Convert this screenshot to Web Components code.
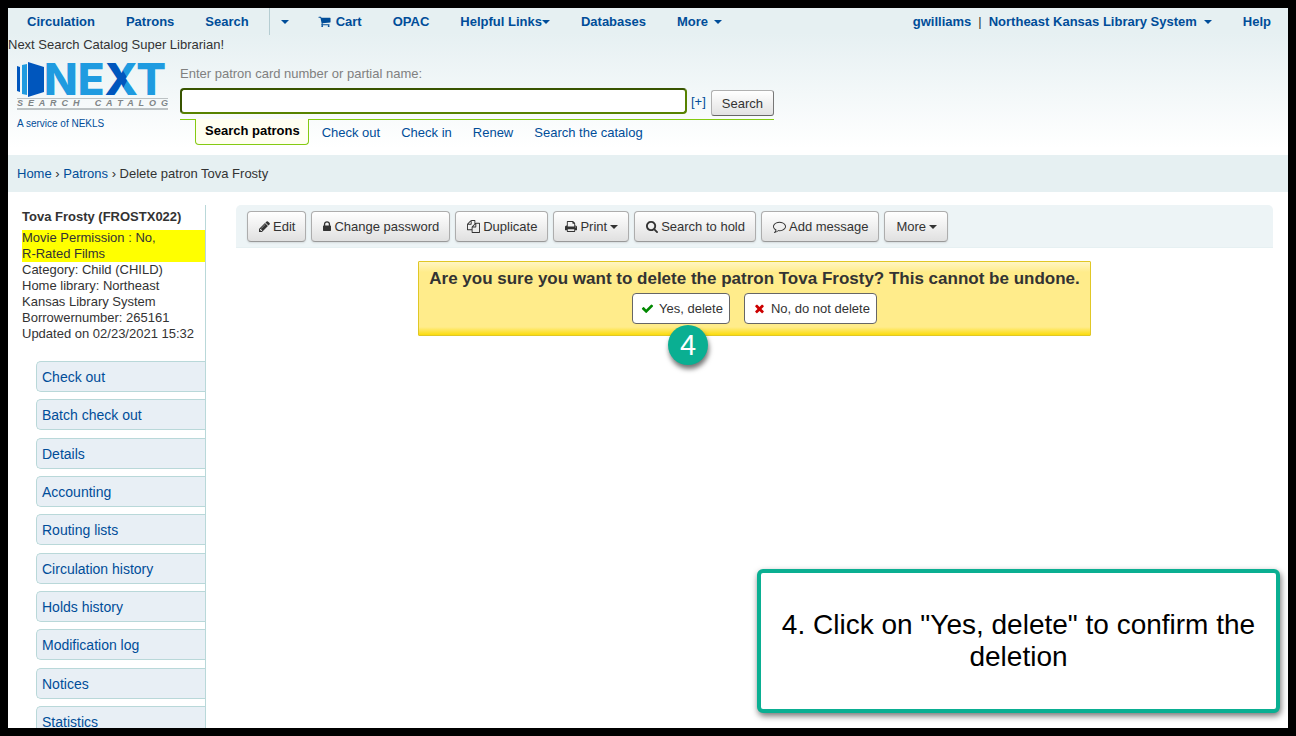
<!DOCTYPE html>
<html lang="en">
<head>
<meta charset="utf-8">
<title>Delete patron Tova Frosty</title>
<style>
  html, body { margin: 0; height: 100%; }
  body { font: 13px/20px "Liberation Sans", Arial, sans-serif; color: #333; background: #000; }
</style>
</head>
<body>
<app-shell></app-shell>

<script>
const LINK = 'a { color: #004d99; text-decoration: none; }';

function define(name, css, html, upgrade) {
  const template = document.createElement('template');
  template.innerHTML = `<style>:host, *, *::before, *::after { box-sizing: border-box; } ${LINK} ${css}</style>${html}`;
  customElements.define(name, class extends HTMLElement {
    connectedCallback() {
      if (this.shadowRoot) return;
      this.attachShadow({ mode: 'open' }).append(template.content.cloneNode(true));
      if (upgrade) upgrade(this, this.shadowRoot);
    }
  });
}

// name: [drawn width in px, left edge of the glyph, width of the glyph, path]
const ICONS = {
  cart: [13, 0, 1792, 'M704 1536q0 52-38 90t-90 38-90-38-38-90 38-90 90-38 90 38 38 90zm896 0q0 52-38 90t-90 38-90-38-38-90 38-90 90-38 90 38 38 90zm128-1088v512q0 24-16.5 42.5t-40.5 21.5l-1044 122q13 60 13 70 0 16-24 64h920q26 0 45 19t19 45-19 45-45 19h-1024q-26 0-45-19t-19-45q0-11 8-31.5t16-36 21.5-40 15.5-29.5l-177-823h-204q-26 0-45-19t-19-45 19-45 45-19h256q16 0 28.5 6.5t19.5 15.5 13 24.5 8 26 5.5 29.5 4.5 26h1201q26 0 45 19t19 45z'],
  pencil: [11, 128, 1536, 'M491 1536l91-91-235-235-91 91v107h128v128h107zm523-928q0-22-22-22-10 0-17 7l-542 542q-7 7-7 17 0 22 22 22 10 0 17-7l542-542q7-7 7-17zm-54-192l416 416-832 832h-416v-416zm683 96q0 53-37 90l-166 166-416-416 166-165q36-38 90-38 53 0 91 38l235 234q37 39 37 91z'],
  lock: [8, 320, 1152, 'M640 768h512v-192q0-106-75-181t-181-75-181 75-75 181v192zm832 96v576q0 40-28 68t-68 28h-960q-40 0-68-28t-28-68v-576q0-40 28-68t68-28h32v-192q0-184 132-316t316-132 316 132 132 316v192h32q40 0 68 28t28 68z'],
  copy: [13, 0, 1792, 'M1696 384q40 0 68 28t28 68v1216q0 40-28 68t-68 28h-960q-40 0-68-28t-28-68v-288h-544q-40 0-68-28t-28-68v-672q0-40 20-88t48-76l408-408q28-28 76-48t88-20h416q40 0 68 28t28 68v328q68-40 128-40h416zm-544 213l-299 299h299v-299zm-640-384l-299 299h299v-299zm196 647l316-316v-416h-384v416q0 40-28 68t-68 28h-416v640h512v-256q0-40 20-88t48-76zm956 804v-1152h-384v416q0 40-28 68t-68 28h-416v640h896z'],
  print: [12, 64, 1664, 'M448 1536h896v-256h-896v256zm0-640h896v-384h-160q-40 0-68-28t-28-68v-160h-640v640zm1152 64q0-26-19-45t-45-19-45 19-19 45 19 45 45 19 45-19 19-45zm128 0v416q0 13-9.5 22.5t-22.5 9.5h-224v160q0 40-28 68t-68 28h-960q-40 0-68-28t-28-68v-160h-224q-13 0-22.5-9.5t-9.5-22.5v-416q0-79 56.5-135.5t135.5-56.5h64v-544q0-40 28-68t68-28h672q40 0 88 20t76 48l152 152q28 28 48 76t20 88v256h64q79 0 135.5 56.5t56.5 135.5z'],
  search: [12, 64, 1664, 'M1216 832q0-185-131.5-316.5t-316.5-131.5-316.5 131.5-131.5 316.5 131.5 316.5 316.5 131.5 316.5-131.5 131.5-316.5zm512 832q0 52-38 90t-90 38q-54 0-90-38l-343-342q-179 124-399 124-143 0-273.5-55.5t-225-150-150-225-55.5-273.5 55.5-273.5 150-225 225-150 273.5-55.5 273.5 55.5 225 150 150 225 55.5 273.5q0 220-124 399l343 343q37 37 37 90z'],
  comment: [13, 0, 1792, 'M896 384q-204 0-381.5 69.5t-282 187.5-104.5 255q0 112 71.5 213.5t201.5 175.5l87 50-27 96q-24 91-70 172 152-63 275-171l43-38 57 6q69 8 130 8 204 0 381.5-69.5t282-187.5 104.5-255-104.5-255-282-187.5-381.5-69.5zm896 512q0 174-120 321.5t-326 233-450 85.5q-70 0-145-8-198 175-460 242-49 14-114 22h-5q-15 0-27-10.5t-16-27.5v-1q-3-4-.5-12t2-10 4.5-9.5l6-9 7-8.5 8-9q7-8 31-34.5t34.5-38 31-39.5 32.5-51 27-59 26-76q-157-89-247.5-220t-90.5-281q0-174 120-321.5t326-233 450-85.5 450 85.5 326 233 120 321.5z'],
  check: [13, 0, 1792, 'M1671 566q0 40-28 68l-724 724-136 136q-28 28-68 28t-68-28l-136-136-362-362q-28-28-28-68t28-68l136-136q28-28 68-28t68 28l294 295 656-657q28-28 68-28t68 28l136 136q28 28 28 68z'],
  times: [13, 0, 1792, 'M1490 1322q0 40-28 68l-136 136q-28 28-68 28t-68-28l-294-294-294 294q-28 28-68 28t-68-28l-136-136q-28-28-28-68t28-68l294-294-294-294q-28-28-28-68t28-68l136-136q28-28 68-28t68 28l294 294 294-294q28-28 68-28t68 28l136 136q28 28 28 68t-28 68l-294 294 294 294q28 28 28 68z']
};

define('ui-icon',
  ':host { display: inline-block; flex: none; } svg { display: block; height: 13px; fill: currentColor; }',
  '<svg aria-hidden="true"><path/></svg>',
  (host, root) => {
    const [width, left, span, path] = ICONS[host.getAttribute('name')];
    const svg = root.querySelector('svg');
    svg.setAttribute('width', width);
    svg.setAttribute('viewBox', `${left} 0 ${span} 1792`);
    root.querySelector('path').setAttribute('d', path);
  });

define('ui-caret',
  ':host { display: inline-block; width: 8px; height: 4px; flex: none; } svg { display: block; fill: currentColor; }',
  '<svg width="8" height="4" viewBox="0 0 8 4" aria-hidden="true"><path d="M0 0h8L4 4z"/></svg>');

define('top-nav', `
  :host { display: block; font-weight: bold; }
  nav, ul { display: flex; }
  nav { justify-content: space-between; }
  ul { gap: 1px; margin: 0; padding: 0 2px 0 4px; list-style: none; }
  a { display: flex; align-items: center; height: 27px; padding: 0 15px; }
  ui-icon { margin-right: 5px; }
  .gap { gap: 6px; }
  .split { border-left: 1px solid #b5cdd2; margin-left: 4px; }
  .split a { padding: 0 13px 0 11px; }
  .user { display: flex; align-items: center; gap: 7px; font-weight: normal; }
  .user a { gap: 7px; padding-left: 0; font-weight: bold; }
  .user a:first-child { padding: 0; }
`, `
  <nav aria-label="Main">
    <ul>
      <li><a href="#circulation">Circulation</a></li>
      <li><a href="#patrons">Patrons</a></li>
      <li><a href="#search">Search</a></li>
      <li class="split"><a href="#search-menu" aria-label="Search options"><ui-caret></ui-caret></a></li>
      <li><a href="#cart"><ui-icon name="cart"></ui-icon>Cart</a></li>
      <li><a href="#opac">OPAC</a></li>
      <li><a href="#links">Helpful Links<ui-caret></ui-caret></a></li>
      <li><a href="#databases">Databases</a></li>
      <li><a href="#more" class="gap">More<ui-caret></ui-caret></a></li>
    </ul>
    <ul>
      <li class="user"><a href="#account">gwilliams</a><span>|</span><a href="#library">Northeast Kansas Library System<ui-caret></ui-caret></a></li>
      <li><a href="#help">Help</a></li>
    </ul>
  </nav>`);

define('site-logo', `
  :host { display: block; width: 151px; }
  svg { display: block; overflow: visible; }
  .next { font: 800 44px Inter, sans-serif; fill: #1f9be0; }
  .sub { border: solid #bcc2c4; border-width: 1px 0 2px; margin-bottom: 6px; height: 12px;
         font: italic bold 9px/9px "Liberation Sans", Arial, sans-serif; color: #808587;
         text-align: justify; text-align-last: justify; }
  a { display: block; font-size: 10px; line-height: 16px; }
`, `
  <svg width="151" height="36" viewBox="0 0 151 36" role="img" aria-label="NEXT">
    <defs><pattern id="fold" width="160" height="36" patternUnits="userSpaceOnUse">
      <rect width="160" height="36" fill="#1f9be0"/><path d="M88 0h13l10 17L101 36H88z" fill="#0056bd"/>
    </pattern></defs>
    <path d="M0 4l3 1v25l-3-1z" fill="#0056bd"/>
    <path d="M5 3l5-1v31l-5-1z" fill="#1f9be0"/>
    <path d="M11 0l16 5v25l-16 5z" fill="#0056bd"/>
    <text class="next" x="27" y="33">NE<tspan fill="url(#fold)">X</tspan>T</text>
  </svg>
  <div class="sub">S E A R C H &nbsp; C A T A L O G</div>
  <a href="#nekls">A service of NEKLS</a>`);

define('patron-search', `
  :host { display: block; width: 594px; max-width: 100%; }
  label { display: block; color: gray; line-height: 20px; margin-bottom: 4px; }
  .row { display: flex; align-items: flex-start; padding-bottom: 3px; }
  input { flex: 1; min-width: 0; height: 26px; margin: 0; padding: 2px 6px; font: inherit; background: #fff;
          border: 2px solid #578200; border-top-color: #385400; border-left-color: #385400; border-radius: 4px; }
  .row a { padding: 4px 5px 0 4px; }
  button { height: 26px; margin-top: 2px; padding: 1px 10px 0; font: inherit; color: #333;
           background: linear-gradient(#fff, #e2e2e2); border: 1px solid #b0b0b0;
           border-right-color: #777; border-bottom-color: #666; border-radius: 3px; }
  ul { display: flex; gap: 21px; margin: 0; padding: 0 15px; list-style: none; border-top: 1px solid #85ca11; }
  li { padding-top: 3px; }
  li.on { margin: -1px -8px 0 0; padding: 1px 8px 3px 9px; line-height: 21px; font-weight: bold; background: #fffff0;
          border: 1px solid #85ca11; border-top: 0; border-radius: 0 0 4px 4px; }
  .on a { color: #000; }
`, `
  <form>
    <label for="q">Enter patron card number or partial name:</label>
    <div class="row"><input id="q" type="text"><a href="#filters">[+]</a><button type="button">Search</button></div>
  </form>
  <ul>
    <li class="on"><a href="#search-patrons">Search patrons</a></li>
    <li><a href="#checkout">Check out</a></li>
    <li><a href="#checkin">Check in</a></li>
    <li><a href="#renew">Renew</a></li>
    <li><a href="#catalog">Search the catalog</a></li>
  </ul>`);

define('page-header', `
  :host { display: block; height: 147px; background: linear-gradient(#e6f0f2 25px, #fff 140px); }
  p { margin: 0; line-height: 19px; }
  .search { display: flex; gap: 12px; padding: 0 9px; }
  site-logo { padding-top: 8px; }
  patron-search { padding-top: 10px; }
`, `
  <top-nav></top-nav>
  <p>Next Search Catalog Super Librarian!</p>
  <div class="search"><site-logo></site-logo><patron-search></patron-search></div>`);

define('bread-crumbs',
  ':host { display: block; background: #e6f0f2; padding: 9px 9px 8px; } nav { line-height: 20px; }',
  '<nav aria-label="Breadcrumb"><a href="#home">Home</a> › <a href="#patrons">Patrons</a> › Delete patron Tova Frosty</nav>');

define('patron-sidebar', `
  :host { display: block; border-right: 1px solid #b9d8d9; padding-left: 14px; }
  h5 { margin: 0; font-size: 13px; line-height: 24px; padding-bottom: 1px; }
  ul { margin: 0; padding: 0; list-style: none; line-height: 16px; }
  .flag { background: #ff0; }
  .menu { display: flex; flex-direction: column; justify-content: space-between; min-height: 376px;
          margin: 19px 0 0 14px; font-size: 14px; }
  .menu a { display: block; height: 31px; padding: 0 5px; line-height: 30px; background: #e8eff5;
            border: 1px solid #b9d8d9; border-right: 0; border-radius: 5px 0 0 5px; }
`, `
  <h5>Tova Frosty (FROSTX022)</h5>
  <ul>
    <li class="flag">Movie Permission : No,<br>R-Rated Films</li>
    <li>Category: Child (CHILD)</li>
    <li>Home library: Northeast<br>Kansas Library System</li>
    <li>Borrowernumber: 265161</li>
    <li>Updated on 02/23/2021 15:32</li>
  </ul>
  <ul class="menu"></ul>`,
  (host, root) => {
    root.querySelector('.menu').innerHTML = ['Check out', 'Batch check out', 'Details', 'Accounting', 'Routing lists',
      'Circulation history', 'Holds history', 'Modification log', 'Notices', 'Statistics']
      .map(t => `<li><a href="#${t.toLowerCase().replace(/ /g, '-')}">${t}</a></li>`).join('');
  });

define('tool-button', `
  :host { display: block; }
  button { display: flex; align-items: center; gap: 3px; height: 31px; padding: 0 10px 0 11px; font: inherit; color: #333; white-space: nowrap;
           background: linear-gradient(#fff, #e0e0e0); border: 1px solid #adadad; border-bottom-color: #999; border-radius: 4px;
           box-shadow: 0 1px 2px rgba(0, 0, 0, .1); }
`, '<button type="button"><slot></slot></button>');

define('tool-bar', `
  :host { display: flex; flex-wrap: wrap; gap: 5px; padding: 6px 11px 5px; background: #edf4f6; border: 1px solid #e6f0f2; border-width: 0 0 1px;
          border-radius: 5px 5px 0 0; }
`, `
  <tool-button><ui-icon name="pencil"></ui-icon>Edit</tool-button>
  <tool-button><ui-icon name="lock"></ui-icon>Change password</tool-button>
  <tool-button><ui-icon name="copy"></ui-icon>Duplicate</tool-button>
  <tool-button><ui-icon name="print"></ui-icon>Print<ui-caret></ui-caret></tool-button>
  <tool-button><ui-icon name="search"></ui-icon>Search to hold</tool-button>
  <tool-button><ui-icon name="comment"></ui-icon>Add message</tool-button>
  <tool-button>More<ui-caret></ui-caret></tool-button>`);

define('step-badge', `
  :host { display: grid; place-items: center; width: 40px; height: 40px; border-radius: 50%; background: #0aaf92; color: #fff;
          font-size: 29px; box-shadow: 1px 4px 5px rgba(0, 0, 0, .55); }
`, '<slot></slot>');

define('confirm-dialog', `
  :host { display: block; width: fit-content; margin: 13px auto 0; padding: 7px 10px 11px; border: 1px solid #e0c726; border-radius: 1px;
          background: linear-gradient(#fff6c4, #ffec8b 10px, #ffec8b calc(100% - 8px), #fbdc0c); text-align: center; }
  h3 { margin: 0 0 4px; font-size: 17px; line-height: 20px; }
  .actions { display: flex; justify-content: center; gap: 14px; }
  .step { position: relative; }
  button { display: flex; align-items: center; gap: 5px; height: 31px; padding: 0 6px 0 8px; font: inherit; color: #333; background: #fff;
           border: 1px solid #666; border-radius: 4px; }
  .yes ui-icon { color: #080; }
  .no ui-icon { color: #c00; }
  step-badge { position: absolute; top: 32px; left: 36px; }
`, `
  <h3>Are you sure you want to delete the patron Tova Frosty? This cannot be undone.</h3>
  <div class="actions">
    <div class="step"><button type="button" class="yes"><ui-icon name="check"></ui-icon>Yes, delete</button><step-badge>4</step-badge></div>
    <button type="button" class="no"><ui-icon name="times"></ui-icon>No, do not delete</button>
  </div>`);

define('step-note', `
  :host { display: grid; place-items: center; padding: 10px 18px; border: 4px solid #0aaf92; border-radius: 6px; background: #fff; color: #000;
          font-size: 28px; line-height: 32px; text-align: center; box-shadow: 1px 3px 6px rgba(0, 0, 0, .55); }
`, '<div><slot></slot></div>');

define('app-shell', `
  :host { display: block; height: 100vh; padding: 8px; }
  .page { position: relative; height: 100%; overflow: hidden; background: #fff; }
  .body { display: grid; grid-template-columns: 198px minmax(0, 1fr); gap: 30px; padding: 13px 15px 0 0; }
  step-note { position: absolute; right: 8px; bottom: 15px; width: 523px; height: 144px; }
`, `
  <div class="page">
    <page-header></page-header>
    <bread-crumbs></bread-crumbs>
    <div class="body">
      <patron-sidebar></patron-sidebar>
      <main><tool-bar></tool-bar><confirm-dialog></confirm-dialog></main>
    </div>
    <step-note>4. Click on "Yes, delete" to confirm the deletion</step-note>
  </div>`);
</script>
</body>
</html>
